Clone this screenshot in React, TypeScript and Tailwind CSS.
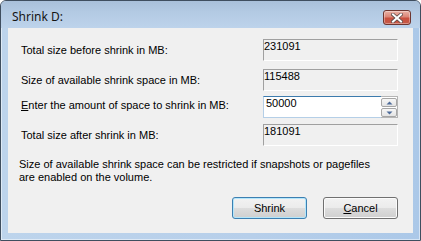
import React from 'react';

const body = "font-['Liberation_Sans',Arial,sans-serif] text-[11px] leading-[13px] text-black";

function CloseButton() {
  return (
    <div className="flex h-[15px] w-[28px] items-center justify-center rounded-[3px] border border-[#6e3630] bg-[linear-gradient(#eab2a6,#dc8677_45%,#c9503f_55%,#c55a48)] shadow-[inset_0_0_0_1px_rgba(255,255,255,0.35)]">
      <svg width="12" height="10" viewBox="0 0 12 10">
        <path d="M2 1.5 L10 8.5 M10 1.5 L2 8.5" stroke="#5c4a48" strokeWidth="3.6" strokeLinecap="square" />
        <path d="M2 1.5 L10 8.5 M10 1.5 L2 8.5" stroke="#ffffff" strokeWidth="2" strokeLinecap="square" />
      </svg>
    </div>
  );
}

function ReadOnlyBox({ value }: { value: string }) {
  return (
    <div className="h-[22px] w-[135px] border-t border-l border-r border-b border-t-[#a0a0a0] border-l-[#a0a0a0] border-r-white border-b-white bg-[#f0f0f0]">
      {value}
    </div>
  );
}

function Row({ label, value, className }: { label: React.ReactNode; value: string; className?: string }) {
  return (
    <div className={`flex items-center justify-between ${className ?? ''}`}>
      <span>{label}</span>
      <ReadOnlyBox value={value} />
    </div>
  );
}

function SpinButton({ up }: { up?: boolean }) {
  return (
    <div className="flex h-[9px] w-full items-center justify-center rounded-[2px] border border-[#a6a6a6] bg-[linear-gradient(#f7f7f7,#e4e4e4)]">
      <svg width="7" height="4" viewBox="0 0 7 4">
        <path d={up ? 'M0.5 3.5 L3.5 0.5 L6.5 3.5 Z' : 'M0.5 0.5 L3.5 3.5 L6.5 0.5 Z'} fill="#4d6b99" />
      </svg>
    </div>
  );
}

function WinButton({ children, primary }: { children: React.ReactNode; primary?: boolean }) {
  return (
    <div
      className={`flex h-[22px] w-[75px] items-center justify-center rounded-[3px] border bg-[linear-gradient(#f2f2f2,#ebebeb_50%,#dddddd_50%,#cfcfcf)] ${
        primary
          ? 'border-[#3c7fb1] shadow-[inset_0_0_0_1px_#b3e6fb]'
          : 'border-[#707070] shadow-[inset_0_0_0_1px_#fbfbfb]'
      }`}
    >
      {children}
    </div>
  );
}

export default function App() {
  return (
    <div className="h-[241px] w-[421px] bg-white">
      <div className="flex h-full w-full flex-col rounded-t-[6px] border border-[#3f4e5f] bg-[linear-gradient(90deg,#bdd4ec,#b7cfea_60%,#abc8e8)] shadow-[inset_0_0_0_1px_rgba(255,255,255,0.5)]">
        {/* title bar */}
        <div className="flex h-[27px] items-start justify-between rounded-t-[5px] bg-[linear-gradient(#a9c0da,#b3cae3_40%,#bdd3eb)] pl-[11px] pr-[9px] pt-[8px]">
          <span className="font-['Noto_Sans',sans-serif] text-[12px] leading-[16px] text-[#141414]">Shrink D:</span>
          <div className="mt-[1px]">
            <CloseButton />
          </div>
        </div>

        {/* client area */}
        <div className="flex flex-1 px-[7px] pb-[7px]">
          <div className={`flex flex-1 flex-col bg-[#f0f0f0] pl-[13px] pr-[15px] pt-[11px] ${body}`}>
            <Row label="Total size before shrink in MB:" value="231091" />
            <Row className="mt-[8px]" label="Size of available shrink space in MB:" value="115488" />

            <div className="mt-[5px] flex items-center justify-between">
              <span className="-mt-[3px]">
                <span className="underline">E</span>nter the amount of space to shrink in MB:
              </span>
              <div className="flex h-[22px] w-[135px]">
                <div className="h-full w-[118px] border-t border-l border-b border-t-[#3d7bad] border-l-[#b5cfe7] border-b-[#b5cfe7] bg-white pl-[2px]">
                  50000
                </div>
                <div className="flex h-full w-[17px] flex-col gap-[1px] border-t border-r border-b border-[#b5b5b5] bg-white pt-[1px]">
                  <SpinButton up />
                  <SpinButton />
                </div>
              </div>
            </div>

            <Row className="mt-[6px]" label="Total size after shrink in MB:" value="181091" />

            <p className="-ml-[2px] mt-[12px]">
              Size of available shrink space can be restricted if snapshots or pagefiles
              <br />
              are enabled on the volume.
            </p>

            <div className="mt-[13px] flex justify-end gap-[16px]">
              <WinButton primary>Shrink</WinButton>
              <WinButton>
                <span>
                  <span className="underline">C</span>ancel
                </span>
              </WinButton>
            </div>
          </div>
        </div>
      </div>
    </div>
  );
}
